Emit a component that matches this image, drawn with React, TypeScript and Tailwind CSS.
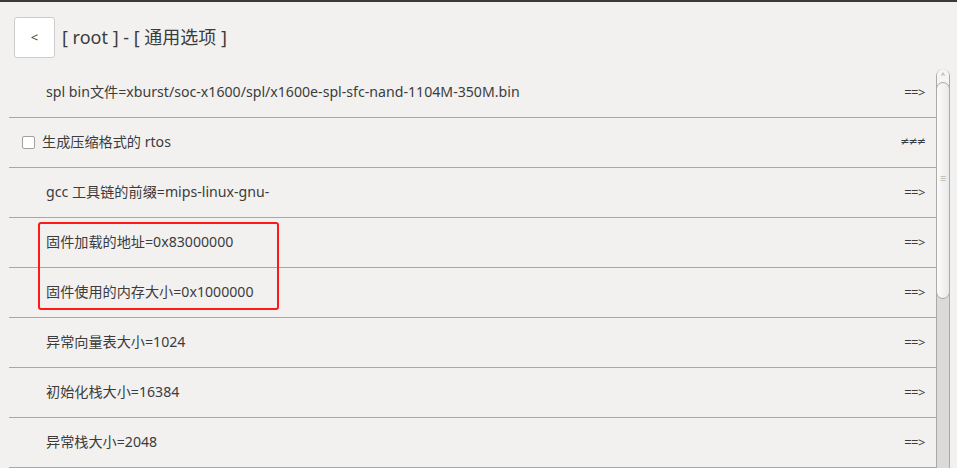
import React from "react";

const rows: { text: string; check?: boolean; arrow: string }[] = [
  { text: "spl bin文件=xburst/soc-x1600/spl/x1600e-spl-sfc-nand-1104M-350M.bin", arrow: "==>" },
  { text: "生成压缩格式的 rtos", check: true, arrow: "≠≠≠" },
  { text: "gcc 工具链的前缀=mips-linux-gnu-", arrow: "==>" },
  { text: "固件加载的地址=0x83000000", arrow: "==>" },
  { text: "固件使用的内存大小=0x1000000", arrow: "==>" },
  { text: "异常向量表大小=1024", arrow: "==>" },
  { text: "初始化栈大小=16384", arrow: "==>" },
  { text: "异常栈大小=2048", arrow: "==>" },
];

export default function App() {
  return (
    <div
      className="w-[957px] h-[468px] overflow-hidden bg-[#f2f1f0] text-[#3c3c3c] border-t-2 border-[#3a3a3a]"
      style={{ fontFamily: '"Noto Sans", "Noto Sans CJK SC", sans-serif' }}
    >
      <div className="flex items-center h-[66px] pl-[14px] pt-[6px] pb-[1px]">
        <button className="w-[41px] h-[41px] bg-white border border-[#cdcdcd] rounded-[3px] text-[13px] leading-none text-[#3c3c3c] flex items-center justify-center">
          &lt;
        </button>
        <span className="ml-[7px] text-[18px]">[ root ] - [ 通用选项 ]</span>
      </div>
      <div className="flex pl-[9px]">
        <div className="relative w-[927px]">
          {rows.map((r, i) => (
            <div
              key={i}
              className="h-[50px] border-b border-[#a8a8a8] flex items-center text-[14.15px]"
            >
              {r.check ? (
                <div className="flex items-center pl-[13px]">
                  <span className="w-[13px] h-[13px] bg-white border border-[#a0a0a0] rounded-[2px]" />
                  <span className="ml-[7px] -mt-[1px]">{r.text}</span>
                </div>
              ) : (
                <span className="pl-[37px] -mt-[1px]">{r.text}</span>
              )}
              {r.check ? (
                <span
                  className="ml-auto mr-[11px] text-[11px] text-[#3c3c3c] tracking-[-1px]"
                  style={{ fontFamily: '"DejaVu Sans", sans-serif' }}
                >
                  {r.arrow}
                </span>
              ) : (
                <span className="ml-auto mr-[11px] text-[13px] text-[#3c3c3c] tracking-[-0.5px]">
                  {r.arrow}
                </span>
              )}
            </div>
          ))}
          <div className="absolute left-[29px] top-[154px] w-[241px] h-[88px] border-2 border-[#ff1a1a] rounded-[3px]" />
        </div>
        <div className="w-[14px] h-[402px] mt-[1px] relative bg-[#dadada] border-x border-[#a9a9a9] rounded-t-[7px]">
          <div className="absolute left-0 right-0 top-0 h-[16px] rounded-t-[7px] bg-[#f4f4f4] flex justify-center">
            <span className="text-[7px] leading-none mt-[3px] text-[#888]">^</span>
          </div>
          <div className="absolute left-[-1px] right-[-1px] top-[13px] h-[217px] rounded-[7px] bg-gradient-to-r from-[#fbfbfb] to-[#e9e9e9] border border-[#a9a9a9] flex items-center justify-center">
            <span className="text-[7px] leading-[3px] text-[#999] mt-[-24px]">≡</span>
          </div>
        </div>
      </div>
    </div>
  );
}
